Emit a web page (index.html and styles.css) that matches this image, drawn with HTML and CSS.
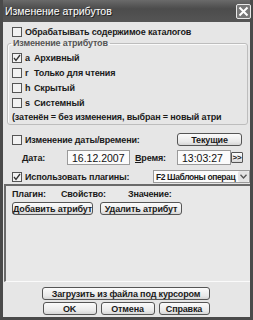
FILE: index.html
```html
<!DOCTYPE html>
<html lang="ru">

<head>
    <meta charset="UTF-8">
    <title>Изменение атрибутов</title>
    <link rel="stylesheet" href="styles.css">
</head>

<body>
    <div class="window">
        <div class="titlebar">
            <span class="title">Изменение атрибутов</span>
            <span class="close">
                <svg width="11" height="11" viewBox="0 0 11 11"><path d="M1.5 1.5 L9.5 9.5 M9.5 1.5 L1.5 9.5" stroke="#fff" stroke-width="2"/></svg>
            </span>
        </div>

        <div class="content">
            <div class="row top-row">
                <span class="box"></span>
                <span class="label">Обрабатывать содержимое каталогов</span>
            </div>

            <fieldset class="group">
                <legend>Изменение атрибутов</legend>
                <div class="attr"><span class="box checked"><svg width="8" height="8" viewBox="0 0 8 8"><path d="M1 4 L3 6.5 L7 1" fill="none" stroke="#333" stroke-width="1.3"/></svg></span><span class="key">a</span><span class="label">Архивный</span></div>
                <div class="attr"><span class="box"></span><span class="key">r</span><span class="label">Только для чтения</span></div>
                <div class="attr"><span class="box"></span><span class="key">h</span><span class="label">Скрытый</span></div>
                <div class="attr"><span class="box"></span><span class="key">s</span><span class="label">Системный</span></div>
                <div class="note">(затенён = без изменения, выбран = новый атри</div>
            </fieldset>

            <div class="row date-head">
                <span class="box"></span>
                <span class="label">Изменение даты/времени:</span>
                <span class="btn btn-now">Текущие</span>
            </div>

            <div class="row date-row">
                <span class="field-label date-label"><u>Д</u>ата:</span>
                <span class="input date-input">16.12.2007</span>
                <span class="field-label time-label"><u>В</u>ремя:</span>
                <span class="input time-input">13:03:27</span>
                <span class="btn btn-more">&gt;&gt;</span>
            </div>

            <div class="row plugins-row">
                <span class="box checked"><svg width="8" height="8" viewBox="0 0 8 8"><path d="M1 4 L3 6.5 L7 1" fill="none" stroke="#333" stroke-width="1.3"/></svg></span>
                <span class="label">Использовать плагины:</span>
                <span class="select">
                    <span class="select-text">F2 Шаблоны операц</span>
                    <span class="select-arrow"><svg width="7" height="5" viewBox="0 0 7 5"><path d="M0.5 0.8 L3.5 4 L6.5 0.8" fill="none" stroke="#555" stroke-width="1.3"/></svg></span>
                </span>
            </div>

            <div class="panel">
                <div class="cols">
                    <span class="col col-plugin">Плагин:</span>
                    <span class="col col-prop">Свойство:</span>
                    <span class="col">Значение:</span>
                </div>
                <div class="panel-buttons">
                    <span class="btn btn-add">Добавить атрибут</span>
                    <span class="btn btn-del">Удалить атрибут</span>
                </div>
            </div>

            <div class="actions">
                <span class="btn btn-load">Загрузить из файла под курсором</span>
                <div class="action-row">
                    <span class="btn btn-ok">OK</span>
                    <span class="btn btn-cancel">Отмена</span>
                    <span class="btn btn-help">Справка</span>
                </div>
            </div>
        </div>
    </div>
</body>

</html>
```

FILE: styles.css
```css
body {
    margin: 0;
    background: #ffffff;
    font-family: "Liberation Sans", Arial, sans-serif;
    font-size: 9px;
    font-weight: bold;
    letter-spacing: -0.15px;
    color: #1a1a1a;
}

.window {
    width: 253px;
    height: 320px;
    box-sizing: border-box;
    padding: 0 3px 3px 3px;
    background: #4a4a4a;
    display: flex;
    flex-direction: column;
    overflow: hidden;
}

.titlebar {
    height: 22px;
    display: flex;
    align-items: center;
    justify-content: space-between;
    padding: 0 0 0 2px;
    background: linear-gradient(#6a6a6a, #4c4c4c 40%, #555555);
}

.title {
    color: #ffffff;
    font-weight: normal;
    font-size: 10.5px;
    letter-spacing: 0;
    text-shadow: 1px 1px 0 #222;
}

.close {
    width: 15px;
    height: 15px;
    box-sizing: border-box;
    margin-right: -1px;
    border: 1px solid #e8e8e8;
    border-radius: 2px;
    background: #777777;
    display: flex;
    align-items: center;
    justify-content: center;
}

.content {
    flex: 1;
    min-width: 0;
    background: #e6e6e6;
    display: flex;
    flex-direction: column;
}

.row {
    display: flex;
    align-items: center;
    white-space: nowrap;
}

.box {
    width: 10px;
    height: 10px;
    box-sizing: border-box;
    border: 1px solid #555;
    background: #f2f2f2;
    flex: none;
    display: flex;
    align-items: center;
    justify-content: center;
}

.top-row {
    margin-top: 4px;
    height: 11px;
    padding-left: 9px;
}

.top-row .label,
.date-head .label,
.plugins-row .label {
    margin-left: 3px;
}

.group {
    margin: 0 2px 0 4px;
    padding: 1px 0 0 0;
    border: 1px solid #bdbdbd;
    border-radius: 3px;
    box-shadow: inset 1px 1px 0 #fafafa;
    height: 88px;
    box-sizing: border-box;
    min-width: 0;
}

.group legend {
    margin-left: 3px;
    padding: 0 2px;
    color: #555;
    line-height: 12px;
}

.attr {
    height: 15px;
    display: flex;
    align-items: center;
    padding-left: 4px;
}

.key {
    width: 9px;
    margin-left: 3px;
}

.note {
    height: 15px;
    line-height: 15px;
    padding-left: 4px;
    white-space: nowrap;
    overflow: hidden;
}

.date-head {
    margin-top: 8px;
    height: 13px;
    padding-left: 9px;
}

.btn {
    box-sizing: border-box;
    border: 1px solid #555;
    border-radius: 3px;
    background: linear-gradient(#fbfbfb, #e9e9e9 70%, #d6d6d6);
    display: flex;
    align-items: center;
    justify-content: center;
    white-space: nowrap;
}

.btn-now {
    width: 65px;
    height: 13px;
    margin-left: auto;
    margin-right: 8px;
}

.date-row {
    margin-top: 4px;
    height: 15px;
}

.date-label {
    margin-left: 19px;
    width: 45px;
}

.input {
    height: 15px;
    box-sizing: border-box;
    border: 1px solid #9a9a9a;
    background: #fbfbfb;
    display: flex;
    align-items: center;
    padding-left: 4px;
    font-weight: normal;
    font-size: 10.5px;
    letter-spacing: 0;
    color: #111;
}

.date-input {
    width: 63px;
}

.time-label {
    margin-left: 5px;
    width: 42px;
}

.time-input {
    width: 54px;
}

.btn-more {
    width: 12px;
    height: 11px;
    border-radius: 1px;
    font-size: 8px;
}

.plugins-row {
    margin-top: 5px;
    height: 13px;
    padding-left: 9px;
}

.select {
    margin-left: auto;
    width: 97px;
    height: 13px;
    box-sizing: border-box;
    border: 1px solid #9a9a9a;
    background: #fbfbfb;
    display: flex;
    align-items: center;
}

.select-text {
    flex: 1;
    padding-left: 2px;
    white-space: nowrap;
    overflow: hidden;
    font-size: 8.5px;
    letter-spacing: -0.4px;
}

.select-arrow {
    width: 11px;
    height: 11px;
    flex: none;
    display: flex;
    align-items: center;
    justify-content: center;
    background: #e4e4e4;
    border-radius: 2px;
}

.panel {
    margin: 1px 0 0 1px;
    height: 98px;
    box-sizing: border-box;
    border-top: 2px solid #6a6a6a;
    border-left: 2px solid #6a6a6a;
    border-bottom: 1px solid #fafafa;
    background: #e8e8e8;
    padding: 2px 0 0 6px;
}

.cols {
    display: flex;
    height: 11px;
    align-items: center;
}

.col-plugin {
    width: 49px;
}

.col-prop {
    width: 67px;
}

.panel-buttons {
    display: flex;
    gap: 7px;
    margin-top: 3px;
}

.btn-add {
    width: 81px;
    height: 13px;
}

.btn-del {
    width: 82px;
    height: 13px;
}

.actions {
    display: flex;
    flex-direction: column;
    align-items: center;
    gap: 2px;
    margin-top: 5px;
    padding-right: 1px;
}

.btn-load {
    width: 168px;
    height: 13px;
}

.action-row {
    display: flex;
    gap: 4px;
}

.btn-ok,
.btn-cancel {
    width: 54px;
    height: 13px;
}

.btn-help {
    width: 51px;
    height: 13px;
}
```
